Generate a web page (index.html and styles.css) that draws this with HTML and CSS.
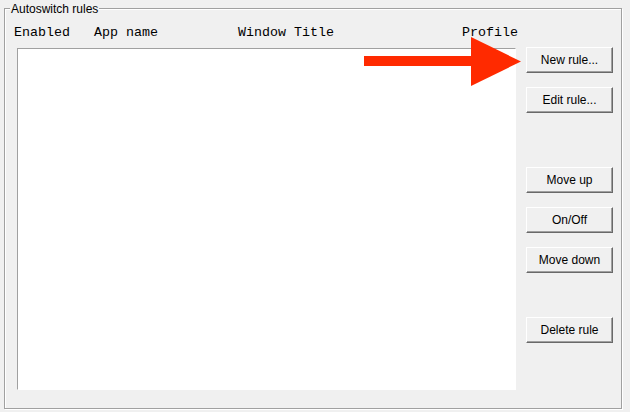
FILE: index.html
```html
<!DOCTYPE html>
<html>
<head>
<meta charset="utf-8">
<title>Autoswitch rules</title>
<link rel="stylesheet" href="styles.css">
</head>
<body>
<div class="group">
  <div class="legend">Autoswitch rules</div>
  <div class="header">
    <span class="col col-enabled">Enabled</span>
    <span class="col col-app">App name</span>
    <span class="col col-title">Window Title</span>
    <span class="col col-profile">Profile</span>
  </div>
  <div class="body">
    <div class="list"></div>
    <div class="buttons">
      <button class="btn">New rule...</button>
      <button class="btn gap-lg">Edit rule...</button>
      <button class="btn">Move up</button>
      <button class="btn">On/Off</button>
      <button class="btn gap-md">Move down</button>
      <button class="btn">Delete rule</button>
    </div>
  </div>
</div>
<svg class="arrow" width="157" height="49" viewBox="0 0 157 49">
  <rect x="0" y="19" width="108" height="10" fill="#ff2a00"/>
  <polygon points="107,0 107,49 157,24.5" fill="#ff2a00"/>
</svg>
</body>
</html>
```
FILE: styles.css
```css
html, body {
  margin: 0;
  padding: 0;
  background: #f0f0f0;
  overflow: hidden;
}
body {
  width: 630px;
  height: 412px;
  position: relative;
  font-family: "Liberation Sans", Arial, sans-serif;
  font-size: 12px;
  color: #000;
}
.group {
  position: relative;
  box-sizing: border-box;
  margin: 8px 0 0 4px;
  width: 618px;
  height: 401px;
  border: 1px solid #a0a0a0;
  box-shadow: inset 1px 1px 0 #fff, 1px 1px 0 #fff;
}
.legend {
  position: absolute;
  left: 5px;
  top: -7px;
  padding: 0 1px;
  line-height: 14px;
  background: #f0f0f0;
  white-space: nowrap;
}
.header {
  box-sizing: border-box;
  height: 38px;
  padding: 16px 0 0 9px;
  display: flex;
  font-family: "Liberation Mono", "Courier New", monospace;
  font-size: 13.333px;
  line-height: 16px;
  white-space: pre;
}
.col-enabled { width: 80px; }
.col-app { width: 144px; }
.col-title { width: 224px; }
.body {
  display: flex;
  align-items: flex-start;
}
.list {
  box-sizing: border-box;
  margin: 1px 0 0 12px;
  width: 499px;
  height: 342px;
  background: #fff;
  border-top: 1px solid #a0a0a0;
  border-left: 1px solid #a0a0a0;
  border-right: 1px solid #fff;
  border-bottom: 1px solid #fff;
}
.buttons {
  margin-left: 10px;
  display: flex;
  flex-direction: column;
  gap: 14px;
}
.btn {
  box-sizing: border-box;
  width: 87px;
  height: 26px;
  padding: 0;
  margin: 0;
  font-family: "Liberation Sans", Arial, sans-serif;
  font-size: 12px;
  color: #000;
  background: #f0f0f0;
  border-top: 1px solid #fff;
  border-left: 1px solid #fff;
  border-right: 1px solid #696969;
  border-bottom: 1px solid #696969;
  box-shadow: inset -1px -1px 0 #a0a0a0;
  border-radius: 0;
  outline: none;
}
.gap-lg { margin-bottom: 40px; }
.gap-md { margin-bottom: 30px; }
.arrow {
  position: absolute;
  left: 364px;
  top: 37px;
}
```
